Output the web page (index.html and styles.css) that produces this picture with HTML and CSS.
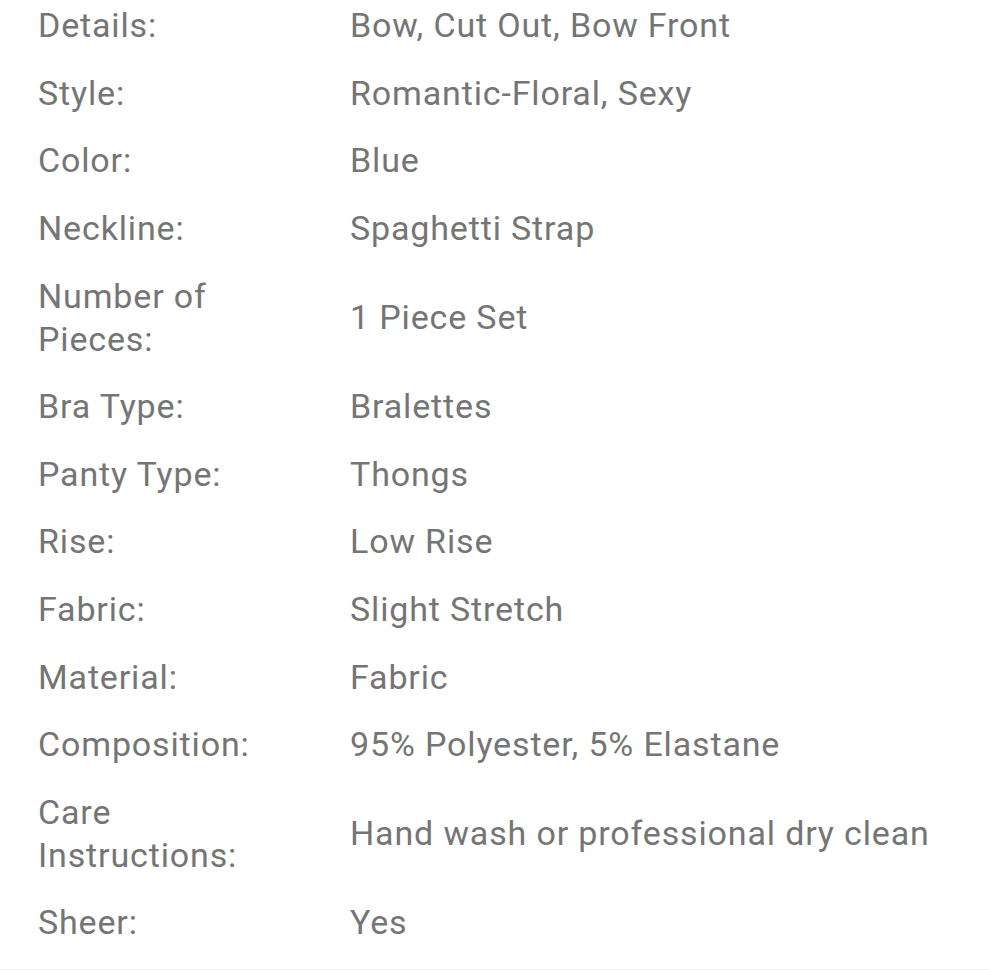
FILE: index.html
```html
<!DOCTYPE html>
<html>
<head>
<meta charset="utf-8">
<link rel="stylesheet" href="styles.css">
</head>
<body>
<div class="specs">
  <div class="row"><div class="label">Details:</div><div class="value">Bow, Cut Out, Bow Front</div></div>
  <div class="row"><div class="label">Style:</div><div class="value">Romantic-Floral, Sexy</div></div>
  <div class="row"><div class="label">Color:</div><div class="value">Blue</div></div>
  <div class="row"><div class="label">Neckline:</div><div class="value">Spaghetti Strap</div></div>
  <div class="row"><div class="label">Number of Pieces:</div><div class="value">1 Piece Set</div></div>
  <div class="row"><div class="label">Bra Type:</div><div class="value">Bralettes</div></div>
  <div class="row"><div class="label">Panty Type:</div><div class="value">Thongs</div></div>
  <div class="row"><div class="label">Rise:</div><div class="value">Low Rise</div></div>
  <div class="row"><div class="label">Fabric:</div><div class="value">Slight Stretch</div></div>
  <div class="row"><div class="label">Material:</div><div class="value">Fabric</div></div>
  <div class="row"><div class="label">Composition:</div><div class="value">95% Polyester, 5% Elastane</div></div>
  <div class="row"><div class="label">Care Instructions:</div><div class="value">Hand wash or professional dry clean</div></div>
  <div class="row"><div class="label">Sheer:</div><div class="value">Yes</div></div>
</div>
</body>
</html>
```

FILE: styles.css
```css
html, body {
  margin: 0;
  padding: 0;
  background: #fff;
  overflow: hidden;
}
.specs {
  margin-top: -8px;
  padding: 0 38px 12px 38px;
  border-bottom: 2px solid #efefef;
  font-family: Roboto, "Liberation Sans", sans-serif;
  font-size: 34px;
  line-height: 43px;
  letter-spacing: 0.85px;
  color: #757575;
}
.row {
  display: grid;
  grid-template-columns: 312px 1fr;
  align-items: center;
  padding: 12.3px 0;
}
.label {
  padding-right: 60px;
}
```
